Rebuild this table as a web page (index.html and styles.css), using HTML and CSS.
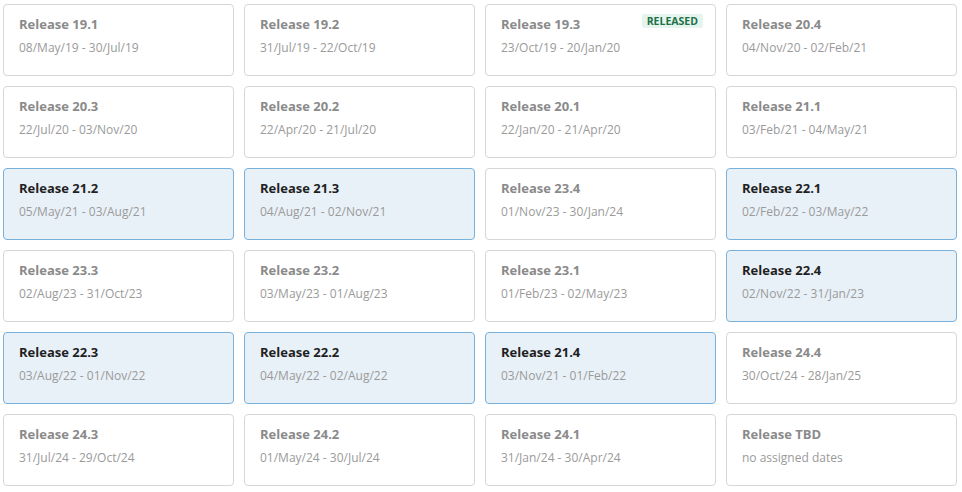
FILE: index.html
```html
<!DOCTYPE html>
<html>
<head>
<meta charset="utf-8">
<link rel="stylesheet" href="styles.css">
</head>
<body>
<div class="grid">
  <div class="card"><div class="title">Release 19.1</div><div class="dates">08/May/19 - 30/Jul/19</div></div>
  <div class="card"><div class="title">Release 19.2</div><div class="dates">31/Jul/19 - 22/Oct/19</div></div>
  <div class="card"><div class="title">Release 19.3</div><div class="dates">23/Oct/19 - 20/Jan/20</div><span class="badge">RELEASED</span></div>
  <div class="card"><div class="title">Release 20.4</div><div class="dates">04/Nov/20 - 02/Feb/21</div></div>

  <div class="card"><div class="title">Release 20.3</div><div class="dates">22/Jul/20 - 03/Nov/20</div></div>
  <div class="card"><div class="title">Release 20.2</div><div class="dates">22/Apr/20 - 21/Jul/20</div></div>
  <div class="card"><div class="title">Release 20.1</div><div class="dates">22/Jan/20 - 21/Apr/20</div></div>
  <div class="card"><div class="title">Release 21.1</div><div class="dates">03/Feb/21 - 04/May/21</div></div>

  <div class="card active"><div class="title">Release 21.2</div><div class="dates">05/May/21 - 03/Aug/21</div></div>
  <div class="card active"><div class="title">Release 21.3</div><div class="dates">04/Aug/21 - 02/Nov/21</div></div>
  <div class="card"><div class="title">Release 23.4</div><div class="dates">01/Nov/23 - 30/Jan/24</div></div>
  <div class="card active"><div class="title">Release 22.1</div><div class="dates">02/Feb/22 - 03/May/22</div></div>

  <div class="card"><div class="title">Release 23.3</div><div class="dates">02/Aug/23 - 31/Oct/23</div></div>
  <div class="card"><div class="title">Release 23.2</div><div class="dates">03/May/23 - 01/Aug/23</div></div>
  <div class="card"><div class="title">Release 23.1</div><div class="dates">01/Feb/23 - 02/May/23</div></div>
  <div class="card active"><div class="title">Release 22.4</div><div class="dates">02/Nov/22 - 31/Jan/23</div></div>

  <div class="card active"><div class="title">Release 22.3</div><div class="dates">03/Aug/22 - 01/Nov/22</div></div>
  <div class="card active"><div class="title">Release 22.2</div><div class="dates">04/May/22 - 02/Aug/22</div></div>
  <div class="card active"><div class="title">Release 21.4</div><div class="dates">03/Nov/21 - 01/Feb/22</div></div>
  <div class="card"><div class="title">Release 24.4</div><div class="dates">30/Oct/24 - 28/Jan/25</div></div>

  <div class="card"><div class="title">Release 24.3</div><div class="dates">31/Jul/24 - 29/Oct/24</div></div>
  <div class="card"><div class="title">Release 24.2</div><div class="dates">01/May/24 - 30/Jul/24</div></div>
  <div class="card"><div class="title">Release 24.1</div><div class="dates">31/Jan/24 - 30/Apr/24</div></div>
  <div class="card"><div class="title">Release TBD</div><div class="dates">no assigned dates</div></div>
</div>
</body>
</html>
```
FILE: styles.css
```css
html, body {
  margin: 0;
  padding: 0;
  background: #ffffff;
}
body {
  font-family: "Open Sans", "Noto Sans", sans-serif;
}
.grid {
  display: grid;
  grid-template-columns: repeat(4, 231px);
  grid-auto-rows: 72px;
  gap: 10px;
  padding: 4px 0 0 3px;
}
.card {
  position: relative;
  box-sizing: border-box;
  border: 1px solid #d6d6d6;
  border-radius: 4px;
  background: #fff;
  padding: 10px 15px 0 15px;
}
.card.active {
  background: #e9f1f8;
  border-color: #78b2dc;
}
.title {
  font-size: 13px;
  font-weight: 700;
  line-height: 18px;
  color: #8a8a8a;
}
.card.active .title {
  color: #1f1f1f;
}
.dates {
  margin-top: 7px;
  font-size: 12px;
  line-height: 16px;
  color: #9a9a9a;
}
.badge {
  position: absolute;
  top: 9px;
  right: 12px;
  background: #e5f5ee;
  color: #1d7048;
  font-size: 10.5px;
  font-weight: 700;
  line-height: 14px;
  padding: 0 5px;
  border-radius: 2px;
}
```
